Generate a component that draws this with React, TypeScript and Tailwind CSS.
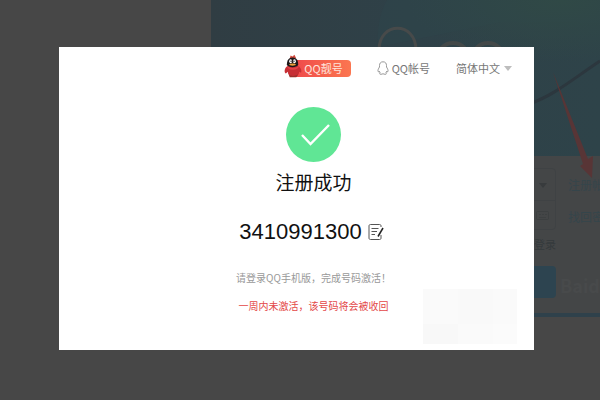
import React from 'react';

function BannerArt() {
  return (
    <svg className="block h-[156px] w-full" viewBox="0 0 389 156" preserveAspectRatio="xMinYMin slice" fill="none" aria-hidden="true">
      <defs>
        <linearGradient id="sky" x1="0" y1="0" x2="1" y2="0">
          <stop offset="0" stopColor="#303d43" />
          <stop offset="0.5" stopColor="#2f4148" />
          <stop offset="1" stopColor="#2e4349" />
        </linearGradient>
        <radialGradient id="glow" cx="0.9" cy="0" r="0.4">
          <stop offset="0" stopColor="#304946" />
          <stop offset="1" stopColor="#304946" stopOpacity="0" />
        </radialGradient>
      </defs>
      <rect width="389" height="156" fill="url(#sky)" />
      <path d="M176 0C168 14 166 32 167 47L290 22L389 22V0Z" fill="#2e444b" opacity="0.6" />
      <rect width="389" height="156" fill="url(#glow)" />
      <path d="M168 50C168 21 205 21 205 50" stroke="#474a4a" strokeWidth="3" />
      <circle cx="242" cy="59" r="16" stroke="#434848" strokeWidth="4" />
      <circle cx="277" cy="59" r="16" stroke="#434848" strokeWidth="4" />
      <path d="M318 104C342 96 362 79 389 61" stroke="#2c373e" strokeWidth="3" />
    </svg>
  );
}

function LoginWindow() {
  return (
    <section className="relative ml-[211px] overflow-hidden bg-[#444647] text-[#35454b]">
      <BannerArt />
      <div className="flex gap-3 pt-3">
        <form className="w-[345px] shrink-0" onSubmit={(e) => e.preventDefault()}>
          <div className="rounded border border-[#3f4244]">
            <div className="flex h-8 items-center border-b border-[#3f4244] pr-2">
              <input aria-label="QQ" className="min-w-0 flex-1 bg-transparent outline-none" />
              <svg className="h-2 w-2" viewBox="0 0 8 8" aria-hidden="true"><path d="M0 2H8L4 7Z" fill="#383b3d" /></svg>
            </div>
            <div className="flex h-7 items-center pr-1">
              <input type="password" aria-label="密码" className="min-w-0 flex-1 bg-transparent outline-none" />
              <svg className="h-3 w-4" viewBox="0 0 16 12" fill="none" stroke="#3d4041" aria-hidden="true">
                <rect x="1.5" y="2.5" width="12" height="8" rx="1" /><path d="M4 5.500H6M7 5.500H9M10 5.500H12M4 8.500H11" />
              </svg>
            </div>
          </div>
          <label className="mt-1 flex h-6 items-center justify-end gap-1 pb-1 text-[11px] text-[#353a3c]">
            <input type="checkbox" className="size-3" />
            登录
          </label>
          <button type="submit" aria-label="登录" className="mt-2 block h-8 w-full rounded bg-[#2d4450]" />
        </form>
        <nav className="flex min-w-0 flex-1 flex-col pt-px text-xs whitespace-nowrap">
          <a href="#register" className="leading-8">注册帐</a>
          <a href="#recover" className="leading-8">找回密</a>
          <span className="-ml-2 mt-9 text-lg leading-8 font-bold text-[#484a4b]">Baidu</span>
        </nav>
      </div>
      <div className="mt-3 h-1 bg-[#2f414b]" />
      <svg className="absolute top-[72px] right-0 h-28 w-12" viewBox="0 0 48 112" aria-hidden="true">
        <path d="M1 0L36 87L41 84L40 106L28 94L31 92Z" fill="#583536" />
      </svg>
    </section>
  );
}

function RedPenguin() {
  return (
    <svg className="relative z-10 h-6 w-[18px] shrink-0" viewBox="0 0 19 24" aria-hidden="true">
      <path d="M6 4L7 1L9 2L11 0L13 4Z" fill="#d2483c" />
      <path d="M4 12C0 14 0 19 2 20L4 18C4 21 6 23 10 23C14 23 16 21 16 18L18 19C19 17 18 14 15 12Z" fill="#c72f35" />
      <path d="M3 11C3 6 5 3 9 3C14 3 15 7 15 11C13 14 5 14 3 11Z" fill="#1c1719" />
      <ellipse cx="7" cy="7" rx="1.500" ry="2" fill="#fff" /><ellipse cx="11" cy="7" rx="1.500" ry="2" fill="#fff" />
      <circle cx="7.500" cy="7" r="0.700" fill="#111" /><circle cx="10.500" cy="7" r="0.700" fill="#111" />
      <ellipse cx="9" cy="10.500" rx="3.500" ry="1.200" fill="#eda13c" />
      <path d="M3 12Q9 16 16 12L15 14Q9 18 4 14Z" fill="#e34247" />
      <path d="M5 21Q9 24 15 21L13 24H6Z" fill="#9b302b" />
    </svg>
  );
}

function OutlinePenguin() {
  return (
    <svg className="h-[14px] w-3" viewBox="0 0 12 14" fill="none" stroke="#8d8d8d" strokeWidth="0.900" strokeLinejoin="round" aria-hidden="true">
      <path d="M6 .8C3.500 .8 2.500 2.500 2.500 4.500V6C1.500 7.500 .7 9 1 10.500C1.300 11 1.800 10.500 2.200 10C2.400 11 2.800 11.600 3.300 12C2.300 12.400 2.500 13.300 3.500 13.300C4.800 13.300 5.500 13 6 12.700C6.500 13 7.200 13.300 8.500 13.300C9.500 13.300 9.700 12.400 8.700 12C9.200 11.600 9.600 11 9.800 10C10.200 10.500 10.700 11 11 10.500C11.300 9 10.500 7.500 9.500 6V4.500C9.500 2.500 8.500 .8 6 .8Z" />
    </svg>
  );
}

function SuccessDialog() {
  return (
    <main role="dialog" aria-labelledby="title" className="relative bg-white pt-[7px] pb-9">
      <header className="flex h-6 items-center justify-end gap-[26px] pr-[22px] text-[11px] text-[#777]">
        <a href="#premium" className="flex items-center text-[#ffe4dc]">
          <RedPenguin />
          <span className="-ml-3 mt-[5px] flex h-[17px] items-center rounded bg-gradient-to-r from-[#ee454a] to-[#fb7650] pr-2 pl-[14px]">QQ靓号</span>
        </a>
        <a href="#account" className="flex items-center gap-[3px] pt-1">
          <OutlinePenguin />
          QQ帐号
        </a>
        <div className="flex items-center gap-1 pt-1">
          <select aria-label="语言" className="appearance-none bg-transparent outline-none">
            <option>简体中文</option>
          </select>
          <svg className="h-2 w-2" viewBox="0 0 8 8" aria-hidden="true"><path d="M0 2H8L4 7Z" fill="#bdbdbd" /></svg>
        </div>
      </header>
      <div className="flex flex-col items-center pt-[29px] pl-[34px]">
        <svg className="size-[55px]" viewBox="0 0 55 55" fill="none" aria-hidden="true">
          <circle cx="27.500" cy="27.500" r="27.500" fill="#60e695" />
          <path d="M16 28L24.500 37L43 18" stroke="#fff" strokeWidth="2.400" />
        </svg>
        <h1 id="title" className="mt-[6px] text-[19px] leading-7 text-[#111]">注册成功</h1>
        <div className="mt-[22px] flex items-center gap-[6px] pr-1">
          <strong className="font-['Liberation_Sans',sans-serif] text-[22px] leading-7 font-normal text-[#111]">3410991300</strong>
          <button type="button" aria-label="编辑">
            <svg className="block size-4" viewBox="0 0 16 16" fill="none" stroke="#555" aria-hidden="true">
              <path d="M13 3V2C13 1 12.500 .5 11.500 .5H2.500C1.500 .5 1 1 1 2V14C1 15 1.500 15.500 2.500 15.500H11.500C12.500 15.500 13 15 13 14V11M3.500 4.500H10.500M3.500 7.500H9M3.500 10.500H7" />
              <path d="M15 4L10 12.500" stroke="#222" strokeWidth="1.500" />
            </svg>
          </button>
        </div>
        <p className="mt-6 text-[10px] leading-4 text-[#999]">请登录QQ手机版，完成号码激活！</p>
        <p className="mt-3 text-[10px] leading-4 text-[#e34747]">一周内未激活，该号码将会被收回</p>
      </div>
      <div className="absolute right-[17px] bottom-[6px] grid h-[55px] w-[94px] grid-cols-[35px_35px_1fr] grid-rows-[35px_1fr]">
        <i className="bg-[#fafafa]" /><i className="bg-[#f9f9f9]" /><i className="bg-[#fafafa]" />
        <i className="bg-[#f8f8f8]" /><i className="bg-[#fafafa]" /><i className="bg-[#fbfbfb]" />
      </div>
    </main>
  );
}

export default function App() {
  return (
    <div className="relative min-h-screen overflow-hidden bg-[#474747] font-['Noto_Sans_CJK_SC',sans-serif]">
      <LoginWindow />
      <div className="absolute inset-0 z-20 pt-[47px] pr-[66px] pl-[59px]">
        <SuccessDialog />
      </div>
    </div>
  );
}
